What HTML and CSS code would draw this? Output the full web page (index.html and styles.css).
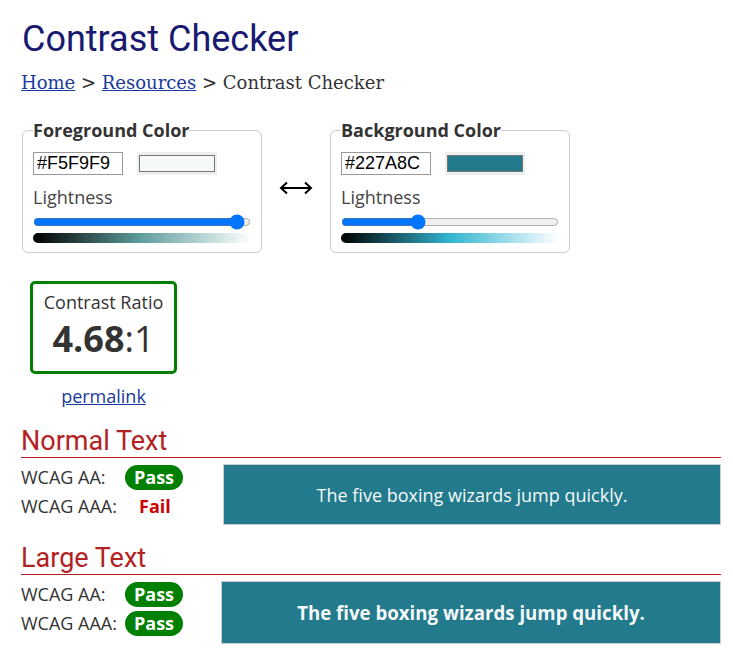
FILE: index.html
```html
<!DOCTYPE html>
<html lang="en">
<head>
<meta charset="utf-8">
<title>Contrast Checker</title>
<link rel="stylesheet" href="styles.css">
</head>
<body>
<div class="page">
  <h1 class="title">Contrast Checker</h1>
  <p class="crumbs"><a href="#">Home</a> &gt; <a href="#">Resources</a> &gt; Contrast Checker</p>

  <div class="pickers">
    <fieldset class="picker">
      <legend>Foreground Color</legend>
      <div class="pick-row">
        <input class="hex" type="text" value="#F5F9F9">
        <div class="swatch"><div class="swatch-in fg"></div></div>
      </div>
      <div class="lbl">Lightness</div>
      <input class="range" type="range" min="0" max="100" value="97">
      <div class="grad grad-fg"></div>
    </fieldset>

    <div class="swap">
      <svg width="34" height="14" viewBox="0 0 34 14" aria-hidden="true">
        <path d="M2 7 H32 M8 1.5 L2 7 L8 12.5 M26 1.5 L32 7 L26 12.5" fill="none" stroke="#000" stroke-width="2" stroke-linejoin="miter"/>
      </svg>
    </div>

    <fieldset class="picker">
      <legend>Background Color</legend>
      <div class="pick-row">
        <input class="hex" type="text" value="#227A8C">
        <div class="swatch"><div class="swatch-in bg"></div></div>
      </div>
      <div class="lbl">Lightness</div>
      <input class="range" type="range" min="0" max="100" value="34">
      <div class="grad grad-bg"></div>
    </fieldset>
  </div>

  <div class="ratio-wrap">
    <div class="ratio">
      <div class="ratio-lbl">Contrast Ratio</div>
      <div class="ratio-val"><b>4.68</b>:1</div>
    </div>
    <a class="permalink" href="#">permalink</a>
  </div>

  <h2 class="sec">Normal Text</h2>
  <div class="result">
    <div class="checks">
      <span class="wcag">WCAG AA:</span><span class="badge pass">Pass</span>
      <span class="wcag">WCAG AAA:</span><span class="badge fail">Fail</span>
    </div>
    <div class="sample">The five boxing wizards jump quickly.</div>
  </div>

  <h2 class="sec">Large Text</h2>
  <div class="result">
    <div class="checks checks-large">
      <span class="wcag">WCAG AA:</span><span class="badge pass">Pass</span>
      <span class="wcag">WCAG AAA:</span><span class="badge pass">Pass</span>
    </div>
    <div class="sample large">The five boxing wizards jump quickly.</div>
  </div>
</div>
</body>
</html>
```

FILE: styles.css
```css
html, body {
  margin: 0;
  padding: 0;
  background: #fff;
}
body {
  font-family: "Open Sans", sans-serif;
  font-size: 18px;
  color: #333;
}
.page {
  width: 700px;
  padding: 18px 0 0 21px;
}
.title {
  font-family: Roboto, sans-serif;
  font-weight: 400;
  font-size: 36px;
  line-height: 42px;
  color: #191970;
  margin: 0 0 0 1px;
}
.crumbs {
  font-family: "DejaVu Serif", serif;
  font-size: 18px;
  line-height: 22px;
  color: #333;
  margin: 12px 0 0 0;
}
.crumbs a {
  color: #1a3a9e;
}
.pickers {
  display: flex;
  align-items: center;
  margin-top: 24px;
  margin-left: 1px;
}
.picker {
  width: 240px;
  box-sizing: border-box;
  border: 1px solid #ccc;
  border-radius: 6px;
  margin: 0;
  padding: 10px 10px 9px 10px;
  min-width: 0;
}
.picker legend {
  font-weight: 700;
  font-size: 18px;
  line-height: 24px;
  padding: 0;
  color: #333;
}
.pick-row {
  display: flex;
  align-items: center;
  gap: 14px;
}
.hex {
  width: 90px;
  height: 23px;
  box-sizing: border-box;
  border: 1px solid #999;
  padding: 0 3px;
  margin: 0;
  font-family: "Liberation Sans", Arial, sans-serif;
  font-size: 18px;
  color: #000;
  border-radius: 0;
}
.swatch {
  width: 80px;
  height: 23px;
  box-sizing: border-box;
  background: #efefef;
  padding: 3px 2px;
}
.swatch-in {
  height: 100%;
  box-sizing: border-box;
  border: 1px solid #767676;
}
.swatch-in.fg { background: #F5F9F9; }
.swatch-in.bg { background: #227A8C; }
.lbl {
  margin-top: 10px;
  line-height: 24px;
  color: #444;
}
.range {
  display: block;
  width: 218px;
  margin: 5px 0 0 0;
  height: 16px;
}
.grad {
  width: 218px;
  height: 10px;
  border-radius: 5px;
  margin-top: 3px;
}
.grad-fg {
  background: linear-gradient(to right, #000, #609f9f, #fff);
}
.grad-bg {
  background: linear-gradient(to right, #000, #32b5d0, #fff);
}
.swap {
  width: 68px;
  display: flex;
  justify-content: center;
  padding-top: 4px;
}
.swap svg { display: block; }
.ratio-wrap {
  width: 147px;
  margin: 28px 0 0 9px;
  display: flex;
  flex-direction: column;
  align-items: center;
}
.ratio {
  width: 147px;
  height: 93px;
  box-sizing: border-box;
  border: 3px solid #008000;
  border-radius: 5px;
  text-align: center;
  padding-top: 6px;
}
.ratio-lbl {
  line-height: 24px;
  color: #333;
}
.ratio-val {
  font-size: 36px;
  line-height: 50px;
  color: #333;
}
.ratio-val b { font-weight: 700; }
.permalink {
  margin-top: 10px;
  color: #1a3a9e;
  line-height: 24px;
}
.sec {
  font-family: Roboto, sans-serif;
  font-weight: 400;
  font-size: 27px;
  line-height: 32px;
  color: #b22222;
  margin: 17px 0 0 0;
  padding: 0;
  border-bottom: 1px solid #b22222;
}
.result {
  display: flex;
  align-items: flex-start;
  margin-top: 6px;
}
.checks {
  display: grid;
  grid-template-columns: 104px auto;
  row-gap: 4px;
  align-items: center;
  width: 202px;
  padding-top: 1px;
}
.checks-large { width: 200px; }
.wcag {
  line-height: 25px;
  color: #333;
}
.badge {
  font-weight: 700;
  line-height: 25px;
  height: 25px;
  justify-self: start;
}
.badge.pass {
  background: #008000;
  color: #fff;
  border-radius: 13px;
  padding: 0 9px;
}
.badge.fail {
  color: #c00;
  padding: 0 14px;
}
.sample {
  flex: 1;
  height: 61px;
  box-sizing: border-box;
  border: 1px solid #ccc;
  background: #227A8C;
  color: #F5F9F9;
  display: flex;
  align-items: center;
  justify-content: center;
}
.sample.large {
  font-size: 18.67px;
  font-weight: 700;
  height: 63px;
}
```
